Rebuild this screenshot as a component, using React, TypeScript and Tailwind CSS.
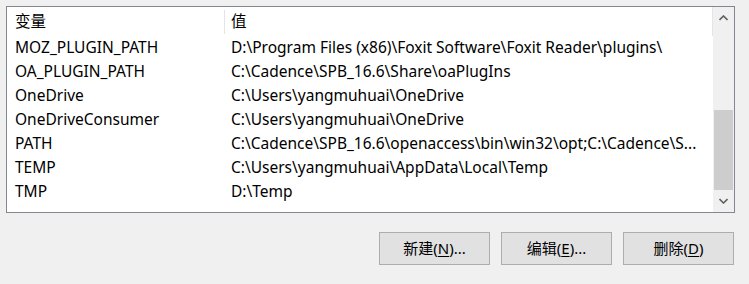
import React from "react";

const rows: [string, string][] = [
  ["MOZ_PLUGIN_PATH", "D:\\Program Files (x86)\\Foxit Software\\Foxit Reader\\plugins\\"],
  ["OA_PLUGIN_PATH", "C:\\Cadence\\SPB_16.6\\Share\\oaPlugIns"],
  ["OneDrive", "C:\\Users\\yangmuhuai\\OneDrive"],
  ["OneDriveConsumer", "C:\\Users\\yangmuhuai\\OneDrive"],
  ["PATH", "C:\\Cadence\\SPB_16.6\\openaccess\\bin\\win32\\opt;C:\\Cadence\\S..."],
  ["TEMP", "C:\\Users\\yangmuhuai\\AppData\\Local\\Temp"],
  ["TMP", "D:\\Temp"],
];

const font = { fontFamily: '"Noto Sans", "Noto Sans CJK SC", sans-serif' };

function Chevron({ up }: { up?: boolean }) {
  return (
    <svg width="9" height="6" viewBox="0 0 9 6">
      <polyline
        points={up ? "0.5,5 4.5,1 8.5,5" : "0.5,1 4.5,5 8.5,1"}
        fill="none"
        stroke="#606060"
        strokeWidth="1.6"
      />
    </svg>
  );
}

function Btn({ label, k, tail }: { label: string; k: string; tail: string }) {
  return (
    <button className="w-[111px] h-[33px] border border-[#adadad] bg-[#e1e1e1] text-[15px] text-black flex items-center justify-center">
      {label}(<span className="underline underline-offset-2">{k}</span>){tail}
    </button>
  );
}

export default function App() {
  return (
    <div className="w-[749px] h-[284px] bg-[#f0f0f0] pt-[6px] pl-[6px] text-[15.5px] text-black" style={font}>
      <div className="w-[729px] h-[207px] border border-[#828790] bg-white flex">
        <div className="flex-1 min-w-0 flex flex-col">
          <div className="h-[29px] flex items-center border-r border-[#e5e5e5]">
            <div className="w-[217px] pl-2 leading-none">变量</div>
            <div className="w-px h-[24px] bg-[#e5e5e5]" />
            <div className="flex-1 pl-[6px] leading-none">值</div>
          </div>
          {rows.map(([name, value]) => (
            <div key={name} className="h-[24px] flex items-center">
              <div className="w-[217px] pl-2 whitespace-nowrap">{name}</div>
              <div className="w-px" />
              <div className="flex-1 min-w-0 pl-[6px] whitespace-nowrap overflow-hidden text-ellipsis">{value}</div>
            </div>
          ))}
        </div>
        <div className="w-[21px] bg-[#f0f0f0] flex flex-col">
          <div className="h-[21px] flex items-center justify-center">
            <Chevron up />
          </div>
          <div className="h-[82px]" />
          <div className="h-[80px] mx-px bg-[#cdcdcd]" />
          <div className="flex-1 flex items-center justify-center">
            <Chevron />
          </div>
        </div>
      </div>
      <div className="flex justify-end gap-[11px] mt-[19px] pr-[15px]">
        <Btn label="新建" k="N" tail="..." />
        <Btn label="编辑" k="E" tail="..." />
        <Btn label="删除" k="D" tail="" />
      </div>
    </div>
  );
}
